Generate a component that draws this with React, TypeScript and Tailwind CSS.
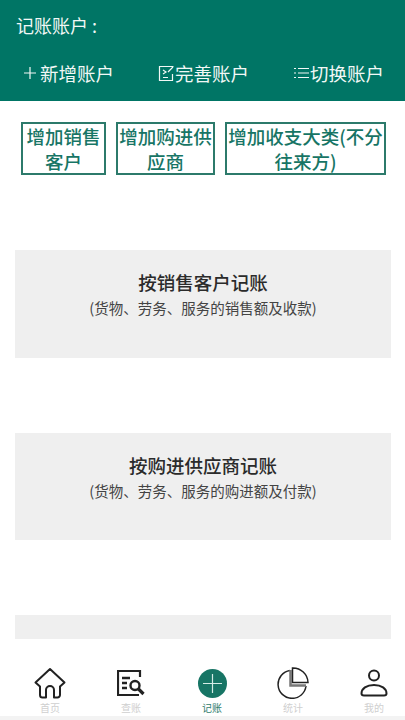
const cjk = { fontFamily: '"Noto Sans CJK SC", "Noto Sans", sans-serif' };

function AddBox({ lines, width }: { lines: string[]; width: string }) {
  return (
    <div className={`${width} h-[53px] border-2 border-[#2c7a6b] flex flex-col items-center justify-center text-[#177565] text-[18.5px] leading-[25px] font-medium whitespace-nowrap`}>
      {lines.map(l => <span key={l}>{l}</span>)}
    </div>
  );
}

function EntryCard({ title, sub }: { title: string; sub: string }) {
  return (
    <div className="ml-[15px] w-[376px] h-[107.5px] bg-[#efefef] flex flex-col items-center pt-[19px] shrink-0">
      <div className="text-[18.5px] leading-[27px] font-medium text-[#2b2b2b]">{title}</div>
      <div className="text-[14.5px] leading-[22px] text-[#444] mt-[1px]">{sub}</div>
    </div>
  );
}

function NavItem({ label, active, children }: { label: string; active?: boolean; children: React.ReactNode }) {
  return (
    <div className="w-[60px] flex flex-col items-center">
      <div className="h-[34px] flex items-center justify-center">{children}</div>
      <div className={`text-[10px] leading-[14px] mt-[1px] ${active ? 'text-[#2f7d6d]' : 'text-[#cfcfcf]'}`}>{label}</div>
    </div>
  );
}

export default function App() {
  return (
    <div className="relative w-[405px] h-[720px] overflow-hidden bg-white" style={cjk}>
      <div className="h-[101px] bg-[#007565] text-[#f2f8f6] px-[16px]">
        <div className="pt-[12px] text-[18px] leading-[26px]">记账账户 :</div>
        <div className="mt-[22px] flex justify-between pl-[8px] pr-[5px] text-[18.5px] leading-[26px]">
          <div className="flex items-center">
            <svg width="12" height="12" viewBox="0 0 12 12" fill="none" stroke="currentColor" strokeWidth="1.2" className="mr-[4px]">
              <path d="M6 0v12M0 6h12" />
            </svg>
            新增账户
          </div>
          <div className="flex items-center">
            <svg width="17" height="17" viewBox="0 0 17 17" fill="none" stroke="currentColor" strokeWidth="1.2">
              <path d="M15.500 1.500H1.500v14h13V9" />
              <path d="M5 5l3 2-3 2M5 12.500h5M10 7l5-5" />
            </svg>
            完善账户
          </div>
          <div className="flex items-center">
            <svg width="17" height="14" viewBox="0 0 17 14" fill="none" stroke="currentColor" strokeWidth="1.2">
              <path d="M5 2.500h11M5 7h11M5 11.500h11" />
              <path d="M1 2.500h2M1 7h2M1 11.500h2" />
            </svg>
            切换账户
          </div>
        </div>
      </div>

      <div className="flex pl-[21px] pt-[21px] gap-[10px]">
        <AddBox width="w-[85px]" lines={['增加销售', '客户']} />
        <AddBox width="w-[99px]" lines={['增加购进供', '应商']} />
        <AddBox width="w-[161px]" lines={['增加收支大类(不分', '往来方)']} />
      </div>

      <div className="mt-[75px] flex flex-col gap-[75px]">
        <EntryCard title="按销售客户记账" sub="(货物、劳务、服务的销售额及收款)" />
        <EntryCard title="按购进供应商记账" sub="(货物、劳务、服务的购进额及付款)" />
        <EntryCard title="" sub="" />
      </div>

      <div className="absolute left-0 right-0 bottom-0 h-[81px] bg-white">
        <div className="flex gap-[21px] pl-[20px] pt-[27px] h-[77px]">
          <NavItem label="首页">
            <svg width="32" height="32" viewBox="0 0 32 32" fill="none" stroke="#222" strokeWidth="2" strokeLinejoin="round">
              <path d="M16 2L1.500 15.500 6 19.500V28a2.500 2.500 0 0 0 2.500 2.500H12V23a4 4 0 0 1 8 0v7.500h3.500A2.500 2.500 0 0 0 26 28v-8.500l4.500-4z" />
            </svg>
          </NavItem>
          <NavItem label="查账">
            <svg width="28" height="26" viewBox="0 0 28 26" fill="none" stroke="#222" strokeWidth="2.200">
              <path d="M23 7V1H1v24h21" />
              <path d="M5 8h8M5 13h5M5 18h5" strokeWidth="2.500" />
              <circle cx="18" cy="15.500" r="4.500" strokeWidth="2.400" />
              <path d="M21.500 19l5 5" strokeWidth="3.200" />
            </svg>
          </NavItem>
          <NavItem label="记账" active>
            <svg width="29" height="29" viewBox="0 0 29 29" fill="none">
              <circle cx="14.500" cy="14.500" r="14.500" fill="#177565" />
              <path d="M14.500 5v19M5 14.500h19" stroke="#d5ece6" strokeWidth="1.200" />
            </svg>
          </NavItem>
          <NavItem label="统计">
            <svg width="32" height="32" viewBox="0 0 32 32" fill="none" stroke="#222" strokeWidth="1.500">
              <path d="M13 3.500a14 14 0 1 0 16 15.500" />
              <path d="M13.500 3v15.500H29" stroke="#777" strokeWidth="2.500" />
              <path d="M15.500 1v14.500H31A15 15 0 0 0 15.500 1z" />
            </svg>
          </NavItem>
          <NavItem label="我的">
            <svg width="28" height="28" viewBox="0 0 28 28" fill="none" stroke="#222" strokeWidth="2">
              <circle cx="14" cy="6.500" r="5" />
              <path d="M1.500 24.500c0-5 5-8.500 12.500-8.500s12.500 3.500 12.500 8.500c0 1.500-1 2-2.500 2H4c-1.500 0-2.500-.5-2.500-2z" strokeLinejoin="round" />
            </svg>
          </NavItem>
        </div>
        <div className="h-[4px] bg-[#f3f3f3]" />
      </div>
    </div>
  );
}
